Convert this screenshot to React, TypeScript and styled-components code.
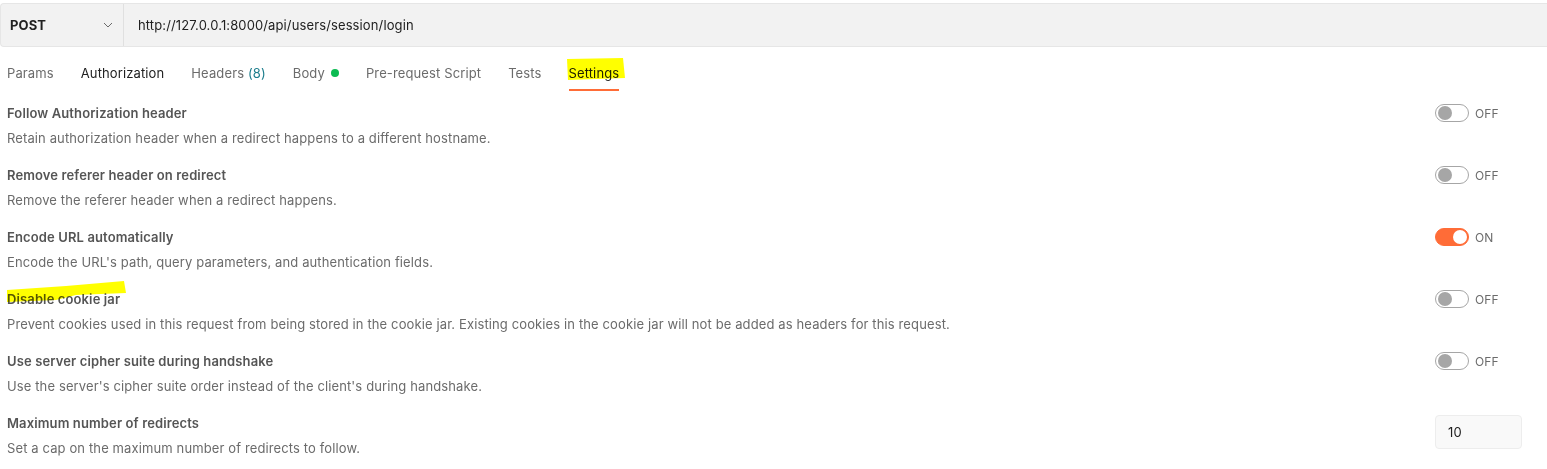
import React from "react";
import styled, { createGlobalStyle } from "styled-components";

const GlobalStyle = createGlobalStyle`
  body {
    margin: 0;
    background: #ffffff;
    font-family: Inter, "Noto Sans", "Liberation Sans", sans-serif;
    font-size: 13px;
    letter-spacing: 0.12px;
    color: #6b6b6b;
  }
`;

const Page = styled.div`
  position: relative;
  width: 1547px;
  height: 469px;
  overflow: hidden;
  padding-top: 3px;
  box-sizing: border-box;
`;

const UrlBar = styled.div`
  display: flex;
  height: 44px;
  box-sizing: border-box;
  background: #f2f2f2;
  border: 1px solid #e6e6e6;
  border-right: none;
  border-radius: 4px 0 0 4px;
`;

const Method = styled.div`
  display: flex;
  align-items: center;
  justify-content: space-between;
  width: 123px;
  padding: 0 10px 0 9px;
  box-sizing: border-box;
  border-right: 1px solid #e0e0e0;
  font-weight: 700;
  color: #212121;
`;

const UrlText = styled.div`
  display: flex;
  align-items: center;
  padding-left: 14px;
  color: #212121;
`;

const Tabs = styled.div`
  display: flex;
  gap: 27px;
  padding: 6px 7px 0;
  height: 45px;
  box-sizing: border-box;
`;

const Tab = styled.div<{ $active?: boolean; $dark?: boolean }>`
  position: relative;
  display: flex;
  align-items: center;
  gap: 6px;
  color: ${(p) => (p.$active || p.$dark ? "#212121" : "#6b6b6b")};
  &::after {
    content: "";
    display: ${(p) => (p.$active ? "block" : "none")};
    position: absolute;
    left: 0;
    right: 0;
    bottom: 1px;
    height: 2px;
    background: #ff6c37;
  }
`;

const Count = styled.span`
  color: #1c7d8c;
`;

const Dot = styled.span`
  width: 8px;
  height: 8px;
  border-radius: 50%;
  background: #0cbb52;
`;

const List = styled.div`
  padding: 11px 0 0 7px;
`;

const Row = styled.div`
  display: grid;
  grid-template-columns: 1fr 112px;
  height: 62px;
`;

const Info = styled.div`
  display: flex;
  flex-direction: column;
  gap: 5px;
`;

const Title = styled.div`
  line-height: 20px;
  font-weight: 600;
  color: #555555;
`;

const Desc = styled.div`
  line-height: 20px;
  color: #6b6b6b;
`;

const Control = styled.div`
  display: flex;
  align-items: flex-start;
`;

const SwitchWrap = styled.div`
  display: flex;
  align-items: center;
  gap: 6px;
  height: 20px;
`;

const Track = styled.div<{ $on: boolean }>`
  position: relative;
  width: 34px;
  height: 18px;
  box-sizing: border-box;
  border-radius: 9px;
  border: 1px solid ${(p) => (p.$on ? "#ff6c37" : "#a6a6a6")};
  background: ${(p) => (p.$on ? "#ff6c37" : "#ffffff")};
  &::after {
    content: "";
    position: absolute;
    top: 1px;
    left: ${(p) => (p.$on ? "17px" : "2px")};
    width: 14px;
    height: 14px;
    border-radius: 50%;
    background: ${(p) => (p.$on ? "#ffffff" : "#a6a6a6")};
  }
`;

const SwitchLabel = styled.span`
  font-size: 12px;
  color: #6b6b6b;
`;

const NumberBox = styled.div`
  margin-top: 2px;
  width: 87px;
  height: 34px;
  box-sizing: border-box;
  padding-left: 12px;
  display: flex;
  align-items: center;
  background: #f9f9f9;
  border: 1px solid #ededed;
  border-radius: 4px;
  color: #212121;
`;

const Marker = styled.svg`
  position: absolute;
  mix-blend-mode: multiply;
  pointer-events: none;
`;

const Chevron = () => (
  <svg width="10" height="6" viewBox="0 0 10 6">
    <path d="M1 1l4 4 4-4" fill="none" stroke="#6b6b6b" strokeWidth="1" />
  </svg>
);

const Toggle = ({ on }: { on: boolean }) => (
  <SwitchWrap>
    <Track $on={on} />
    <SwitchLabel>{on ? "ON" : "OFF"}</SwitchLabel>
  </SwitchWrap>
);

const settings = [
  {
    title: "Follow Authorization header",
    desc: "Retain authorization header when a redirect happens to a different hostname.",
    on: false,
  },
  {
    title: "Remove referer header on redirect",
    desc: "Remove the referer header when a redirect happens.",
    on: false,
  },
  {
    title: "Encode URL automatically",
    desc: "Encode the URL's path, query parameters, and authentication fields.",
    on: true,
  },
  {
    title: "Disable cookie jar",
    desc: "Prevent cookies used in this request from being stored in the cookie jar. Existing cookies in the cookie jar will not be added as headers for this request.",
    on: false,
  },
  {
    title: "Use server cipher suite during handshake",
    desc: "Use the server's cipher suite order instead of the client's during handshake.",
    on: false,
  },
];

const App: React.FC = () => {
  return (
    <Page>
      <GlobalStyle />
      <UrlBar>
        <Method>
          POST
          <Chevron />
        </Method>
        <UrlText>http://127.0.0.1:8000/api/users/session/login</UrlText>
      </UrlBar>
      <Tabs>
        <Tab>Params</Tab>
        <Tab $dark>Authorization</Tab>
        <Tab>
          <span>
            Headers <Count>(8)</Count>
          </span>
        </Tab>
        <Tab>
          Body <Dot />
        </Tab>
        <Tab>Pre-request Script</Tab>
        <Tab>Tests</Tab>
        <Tab $active>Settings</Tab>
      </Tabs>
      <List>
        {settings.map((s) => (
          <Row key={s.title}>
            <Info>
              <Title>{s.title}</Title>
              <Desc>{s.desc}</Desc>
            </Info>
            <Control>
              <Toggle on={s.on} />
            </Control>
          </Row>
        ))}
        <Row>
          <Info>
            <Title>Maximum number of redirects</Title>
            <Desc>Set a cap on the maximum number of redirects to follow.</Desc>
          </Info>
          <Control>
            <NumberBox>10</NumberBox>
          </Control>
        </Row>
      </List>
      <Marker
        width="62"
        height="24"
        viewBox="0 0 62 24"
        style={{ left: 565, top: 57 }}
      >
        <path d="M2 2 L58 1 L60 21 L3 23 Z" fill="#ffff00" />
      </Marker>
      <Marker
        width="122"
        height="24"
        viewBox="0 0 122 24"
        style={{ left: 6, top: 280 }}
      >
        <path
          d="M1 10 L60 6 L118 1 L120 13 L70 15 L50 20 L1 22 Z"
          fill="#ffff00"
        />
      </Marker>
    </Page>
  );
};

export default App;
